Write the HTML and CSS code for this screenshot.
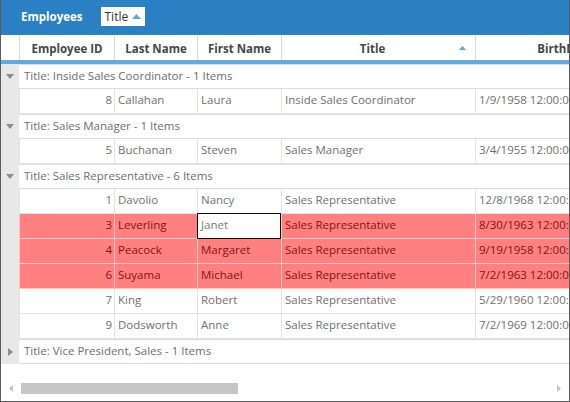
FILE: index.html
```html
<!DOCTYPE html>
<html>
<head>
<meta charset="utf-8">
<link rel="stylesheet" href="styles.css">
</head>
<body>
<div class="grid">
  <div class="toolbar">
    <span class="caption">Employees</span>
    <span class="chip">Title <svg class="chip-arrow" width="9" height="5" viewBox="0 0 9 5"><polygon points="0,5 9,5 4.5,0"/></svg></span>
  </div>
  <div class="head row">
    <div class="indent plain"></div>
    <div class="hcell">Employee ID</div>
    <div class="hcell">Last Name</div>
    <div class="hcell">First Name</div>
    <div class="hcell title-h"><span>Title</span><svg class="sort" width="7" height="4" viewBox="0 0 7 4"><polygon points="0,4 7,4 3.5,0"/></svg></div>
    <div class="hcell">BirthDate</div>
  </div>
  <div class="strip"></div>
  <div class="body">
    <div class="group">
      <div class="indent"><svg class="exp" width="8" height="5" viewBox="0 0 8 5"><polygon points="0,0 8,0 4,5"/></svg></div>
      <div class="gtext">Title: Inside Sales Coordinator - 1 Items</div>
    </div>
    <div class="row data">
      <div class="indent"></div>
      <div class="cell num">8</div><div class="cell">Callahan</div><div class="cell">Laura</div><div class="cell">Inside Sales Coordinator</div><div class="cell">1/9/1958 12:00:00 AM</div>
    </div>
    <div class="group">
      <div class="indent"><svg class="exp" width="8" height="5" viewBox="0 0 8 5"><polygon points="0,0 8,0 4,5"/></svg></div>
      <div class="gtext">Title: Sales Manager - 1 Items</div>
    </div>
    <div class="row data">
      <div class="indent"></div>
      <div class="cell num">5</div><div class="cell">Buchanan</div><div class="cell">Steven</div><div class="cell">Sales Manager</div><div class="cell">3/4/1955 12:00:00 AM</div>
    </div>
    <div class="group">
      <div class="indent"><svg class="exp" width="8" height="5" viewBox="0 0 8 5"><polygon points="0,0 8,0 4,5"/></svg></div>
      <div class="gtext">Title: Sales Representative - 6 Items</div>
    </div>
    <div class="row data">
      <div class="indent"></div>
      <div class="cell num">1</div><div class="cell">Davolio</div><div class="cell">Nancy</div><div class="cell">Sales Representative</div><div class="cell">12/8/1968 12:00:00 AM</div>
    </div>
    <div class="row data hl">
      <div class="indent"></div>
      <div class="cell num">3</div><div class="cell">Leverling</div><div class="cell edit">Janet</div><div class="cell">Sales Representative</div><div class="cell">8/30/1963 12:00:00 AM</div>
    </div>
    <div class="row data hl">
      <div class="indent"></div>
      <div class="cell num">4</div><div class="cell">Peacock</div><div class="cell">Margaret</div><div class="cell">Sales Representative</div><div class="cell">9/19/1958 12:00:00 AM</div>
    </div>
    <div class="row data hl">
      <div class="indent"></div>
      <div class="cell num">6</div><div class="cell">Suyama</div><div class="cell">Michael</div><div class="cell">Sales Representative</div><div class="cell">7/2/1963 12:00:00 AM</div>
    </div>
    <div class="row data">
      <div class="indent"></div>
      <div class="cell num">7</div><div class="cell">King</div><div class="cell">Robert</div><div class="cell">Sales Representative</div><div class="cell">5/29/1960 12:00:00 AM</div>
    </div>
    <div class="row data">
      <div class="indent"></div>
      <div class="cell num">9</div><div class="cell">Dodsworth</div><div class="cell">Anne</div><div class="cell">Sales Representative</div><div class="cell">7/2/1969 12:00:00 AM</div>
    </div>
    <div class="group">
      <div class="indent"><svg class="exp" width="5" height="8" viewBox="0 0 5 8"><polygon points="0,0 5,4 0,8"/></svg></div>
      <div class="gtext">Title: Vice President, Sales - 1 Items</div>
    </div>
  </div>
  <div class="filler"></div>
  <div class="scrollbar">
    <svg class="sarrow" width="4" height="7" viewBox="0 0 4 7"><polygon points="4,0 0,3.5 4,7"/></svg>
    <div class="track"><div class="thumb"></div></div>
    <svg class="sarrow" width="4" height="7" viewBox="0 0 4 7"><polygon points="0,0 4,3.5 0,7"/></svg>
  </div>
</div>
</body>
</html>
```

FILE: styles.css
```css
html, body {
  margin: 0;
  padding: 0;
  background: #ffffff;
}

.grid {
  width: 570px;
  height: 402px;
  box-sizing: border-box;
  border: 1px solid #5c5c5c;
  border-top: none;
  display: flex;
  flex-direction: column;
  overflow: hidden;
  font-family: "Open Sans", "Noto Sans", sans-serif;
  font-size: 11px;
  color: #707070;
  background: #fff;
}

.toolbar {
  height: 35px;
  flex: none;
  background: #2a80c2;
  display: flex;
  align-items: center;
  padding-left: 21px;
  gap: 18px;
  margin: 0 -1px;
}

.caption {
  color: #ffffff;
  font-weight: bold;
  font-size: 11.5px;
  position: relative;
  top: -1px;
}

.chip {
  background: #ffffff;
  color: #333333;
  height: 19px;
  padding: 0 4px 0 4px;
  display: flex;
  align-items: center;
  gap: 4px;
  font-size: 12px;
  position: relative;
  top: -1px;
}

.chip-arrow polygon {
  fill: #62a6d8;
}

.row {
  display: grid;
  grid-template-columns: 18px 95px 83px 84px 194px 180px;
  width: 654px;
}

.head {
  height: 25px;
  flex: none;
  background: #ffffff;
}

.hcell {
  border-left: 1px solid #dadada;
  display: flex;
  align-items: center;
  justify-content: center;
  font-weight: bold;
  font-size: 11.5px;
  color: #474747;
  white-space: nowrap;
  padding-top: 1px;
}

.title-h {
  position: relative;
}

.title-h span {
  margin-right: 12px;
}

.sort {
  position: absolute;
  right: 9px;
  top: 11px;
}

.sort polygon {
  fill: #62a6d8;
}

.strip {
  height: 4px;
  flex: none;
  background: #65abdf;
}

.body {
  flex: none;
  display: flex;
  flex-direction: column;
}

.indent {
  background: #e8e8e8;
  display: flex;
  align-items: center;
  justify-content: center;
}

.indent.plain {
  background: #ffffff;
}

.exp polygon {
  fill: #8c8c8c;
}

.group {
  height: 25px;
  display: flex;
  box-sizing: border-box;
}

.group .indent {
  width: 18px;
  flex: none;
}

.gtext {
  flex: 1;
  display: flex;
  align-items: center;
  padding-left: 5px;
  padding-bottom: 3px;
  border-top: 1px solid #dcdcdc;
  border-bottom: 1px solid #dcdcdc;
  white-space: nowrap;
  font-size: 11.5px;
  color: #6e6e6e;
}

.data {
  height: 25px;
}

.cell {
  border-left: 1px solid #e3e3e3;
  border-bottom: 1px solid #e3e3e3;
  display: flex;
  align-items: center;
  padding-left: 3px;
  padding-bottom: 3px;
  white-space: nowrap;
  overflow: hidden;
  font-size: 11.5px;
}

.cell.num {
  justify-content: flex-end;
  padding-left: 0;
  padding-right: 2px;
}

.hl .cell {
  background: #ff8080;
  color: #8a1010;
  border-left-color: #ffc4c4;
  border-bottom-color: #ffc4c4;
}

.hl .cell.edit {
  background: #ffffff;
  color: #777777;
  border: 1px solid #111111;
  margin-top: -1px;
}

.filler {
  flex: 1;
}

.scrollbar {
  height: 18px;
  flex: none;
  display: flex;
  align-items: center;
  padding: 0 8px 4px 8px;
  gap: 8px;
}

.sarrow polygon {
  fill: #c2c2c2;
}

.track {
  flex: 1;
  height: 11px;
}

.thumb {
  width: 217px;
  height: 11px;
  background: #c6c6c6;
}
```
